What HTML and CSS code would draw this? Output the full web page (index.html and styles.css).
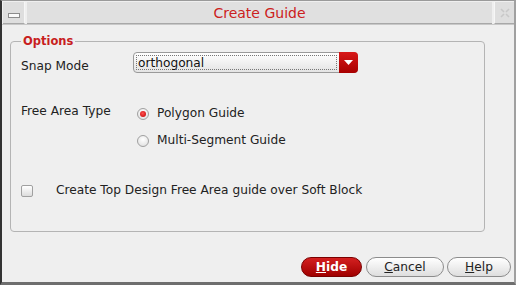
FILE: index.html
```html
<!DOCTYPE html>
<html lang="en">
  <head>
    <meta charset="UTF-8" />
    <title>Create Guide</title>
    <link rel="stylesheet" href="styles.css">
  </head>
  <body>
    <div class="window">
      <div class="titlebar">
        <div class="tb-btn">
          <span class="min-icon"></span>
        </div>
        <div class="title">Create Guide</div>
        <div class="tb-btn close">
          <svg width="12" height="12" viewBox="0 0 12 12">
            <path d="M2 2 L5 5 M10 2 L7 5 M2 10 L5 7 M10 10 L7 7" stroke="#c8c8c8" stroke-width="1.6" fill="none"/>
          </svg>
        </div>
      </div>

      <div class="body">
        <fieldset class="group">
          <legend>Options</legend>

          <div class="row snap">
            <span class="label">Snap Mode</span>
            <div class="select">
              <span class="select-text">orthogonal</span>
              <span class="select-arrow">
                <svg width="9" height="6" viewBox="0 0 9 6"><path d="M0 0 H9 L4.5 5 Z" fill="#fff"/></svg>
              </span>
            </div>
          </div>

          <div class="row area">
            <span class="label">Free Area Type</span>
            <div class="radios">
              <label class="radio"><span class="dot checked"></span>Polygon Guide</label>
              <label class="radio"><span class="dot"></span>Multi-Segment Guide</label>
            </div>
          </div>

          <label class="check-row"><span class="check"></span>Create Top Design Free Area guide over Soft Block</label>
        </fieldset>

        <div class="buttons">
          <button class="btn primary"><u>H</u>ide</button>
          <button class="btn"><u>C</u>ancel</button>
          <button class="btn"><u>H</u>elp</button>
        </div>
      </div>
    </div>
  </body>
</html>
```

FILE: styles.css
```css
* {
  box-sizing: border-box;
}

body {
  margin: 0;
  font-family: "DejaVu Sans", sans-serif;
  font-size: 12.2px;
  color: #222;
  background: #efefef;
}

.window {
  width: 516px;
  height: 285px;
  background: #efefef;
  border-left: 2px solid #333;
  border-top: 1px solid #9a9a9a;
  border-right: 2px solid #a0a0a0;
  border-bottom: 3px solid #6e6e6e;
  display: flex;
  flex-direction: column;
}

.titlebar {
  display: flex;
  gap: 2px;
  height: 24px;
  padding: 1px 0 0 1px;
  border-bottom: 1px solid #c8c8c8;
}

.tb-btn {
  width: 22px;
  background: #dedede;
  border-right: 1px solid #f6f6f6;
  border-bottom: 1px solid #a8a8a8;
  display: flex;
  align-items: center;
  justify-content: center;
}

.tb-btn.close {
  width: 20px;
  border-right: none;
  border-left: 1px solid #f6f6f6;
}

.min-icon {
  width: 12px;
  height: 5px;
  margin-top: 6px;
  background: #fafafa;
  border: 1px solid #8c8c8c;
}

.title {
  flex: 1;
  background: #e0e0e0;
  border-bottom: 1px solid #a8a8a8;
  color: #cc2020;
  font-size: 14px;
  text-align: center;
  line-height: 23px;
}

.body {
  flex: 1;
  display: flex;
  flex-direction: column;
  padding: 9px 29px 0 8px;
}

.group {
  margin: 0;
  height: 198px;
  padding: 0 10px 0 10px;
  border: 1px solid #b4b4b4;
  border-radius: 4px;
}

.group legend {
  padding: 0 2px;
  color: #c81e1e;
  font-weight: bold;
  font-size: 11.5px;
}

.row {
  display: flex;
}

.label {
  width: 112px;
  line-height: 15px;
}

.snap {
  margin-top: 4px;
}

.snap .label {
  padding-top: 7px;
}

.select {
  width: 225px;
  height: 21px;
  display: flex;
  border: 1px solid #9a9a9a;
  border-radius: 4px;
  background: linear-gradient(#ffffff, #e4e4e4);
}

.select-text {
  flex: 1;
  margin: 2px;
  padding-left: 1px;
  border: 1px dotted #777;
  line-height: 14px;
  color: #111;
}

.select-arrow {
  width: 19px;
  margin: -1px -1px -1px 0;
  background: linear-gradient(#d81818, #a80000);
  border-radius: 0 4px 4px 0;
  display: flex;
  align-items: center;
  justify-content: center;
}

.area {
  margin-top: 30px;
}

.radios {
  display: flex;
  flex-direction: column;
  gap: 12px;
  padding-top: 2px;
}

.radio {
  display: flex;
  align-items: center;
  gap: 8px;
  padding-left: 4px;
  line-height: 15px;
}

.dot {
  width: 12px;
  height: 12px;
  border-radius: 50%;
  border: 1px solid #a0a0a0;
  background: radial-gradient(circle at 50% 35%, #ffffff, #dcdcdc);
  display: flex;
  align-items: center;
  justify-content: center;
}

.dot.checked::after {
  content: "";
  width: 6px;
  height: 6px;
  border-radius: 50%;
  background: radial-gradient(circle at 45% 40%, #ff5050, #c00000);
}

.check-row {
  display: flex;
  align-items: center;
  margin-top: 35px;
  gap: 23px;
  line-height: 15px;
}

.check {
  width: 12px;
  height: 12px;
  border: 1px solid #a0a0a0;
  border-radius: 2px;
  background: linear-gradient(#ffffff, #dcdcdc);
}

.buttons {
  display: flex;
  justify-content: flex-end;
  gap: 3px;
  margin-top: auto;
  margin-right: -26px;
  margin-bottom: 5px;
}

.btn {
  height: 20px;
  padding: 0;
  border: 1px solid #8c8c8c;
  border-radius: 10px;
  background: linear-gradient(#ffffff, #dedede);
  font-family: "DejaVu Sans", sans-serif;
  font-size: 12.2px;
  color: #222;
}

.btn.primary {
  width: 61px;
  margin-right: 1px;
  background: linear-gradient(#d42020, #a00000);
  border-color: #7a0000;
  color: #fff;
  font-weight: bold;
}

.btn:nth-child(2) {
  width: 78px;
}

.btn:nth-child(3) {
  width: 64px;
}
```
